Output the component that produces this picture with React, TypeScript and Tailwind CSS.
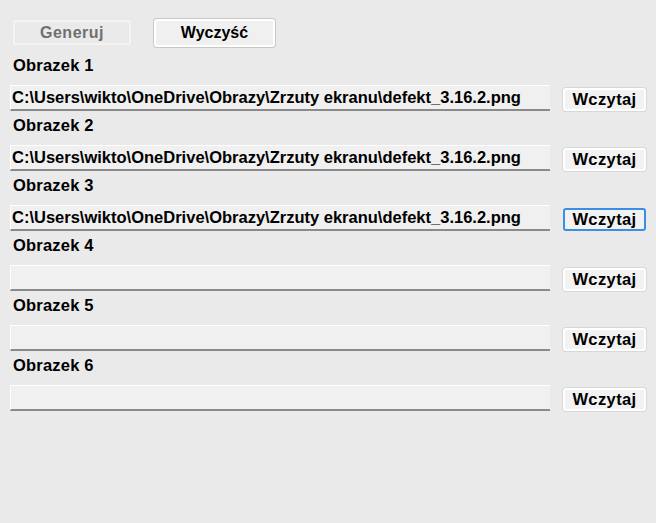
import React from "react";

const path = "C:\\Users\\wikto\\OneDrive\\Obrazy\\Zrzuty ekranu\\defekt_3.16.2.png";

export default function App() {
  // wartości ścieżek dla kolejnych obrazków
  const images = [path, path, path, "", "", ""];

  return (
    <div
      className="w-[656px] h-[523px] bg-[#eaeaea] text-black font-bold text-[16.5px]"
      style={{ fontFamily: '"Liberation Sans", Arial, sans-serif' }}
    >
      <div className="pl-[10px] pt-[19px] w-[646px]">
        {/* PRZYCISKI GÓRNE */}
        <div className="flex items-start h-[32px]">
          <button className="ml-[3px] mt-[1px] w-[118px] h-[25px] rounded-[3px] border-2 border-[#f4f4f4] bg-[#eaeaea] text-[#707070] text-[16px] tracking-[0.5px] leading-none">
            Generuj
          </button>
          <button className="ml-[23px] w-[121px] h-[28px] rounded-[3px] border-2 border-white bg-[#f0f0f0] shadow-[0_0_0_1px_#c8c8c8] text-[16px] leading-none">
            Wyczyść
          </button>
        </div>

        {/* LISTA OBRAZKÓW */}
        {images.map((value, idx) => (
          <div key={idx}>
            <div className="h-[34px] pt-[5px] pl-[3px] leading-[18px] tracking-[0.2px]">Obrazek {idx + 1}</div>
            <div className="flex items-start">
              <div className="w-[540px] h-[26px] bg-[#f0f0f0] border-t border-l border-white border-b-2 border-b-[#8a8a8a] pl-[1px] leading-[23px] whitespace-nowrap overflow-hidden">
                {value}
              </div>
              <button
                className={`ml-[13px] mt-[3px] w-[83px] h-[23px] rounded-[3px] bg-[#f2f2f2] leading-none tracking-[0.4px] ${
                  idx === 2 ? "border-2 border-[#3a8ee6]" : "border-2 border-white shadow-[0_0_0_1px_#d8d8d8]"
                }`}
              >
                Wczytaj
              </button>
            </div>
          </div>
        ))}
      </div>
    </div>
  );
}
